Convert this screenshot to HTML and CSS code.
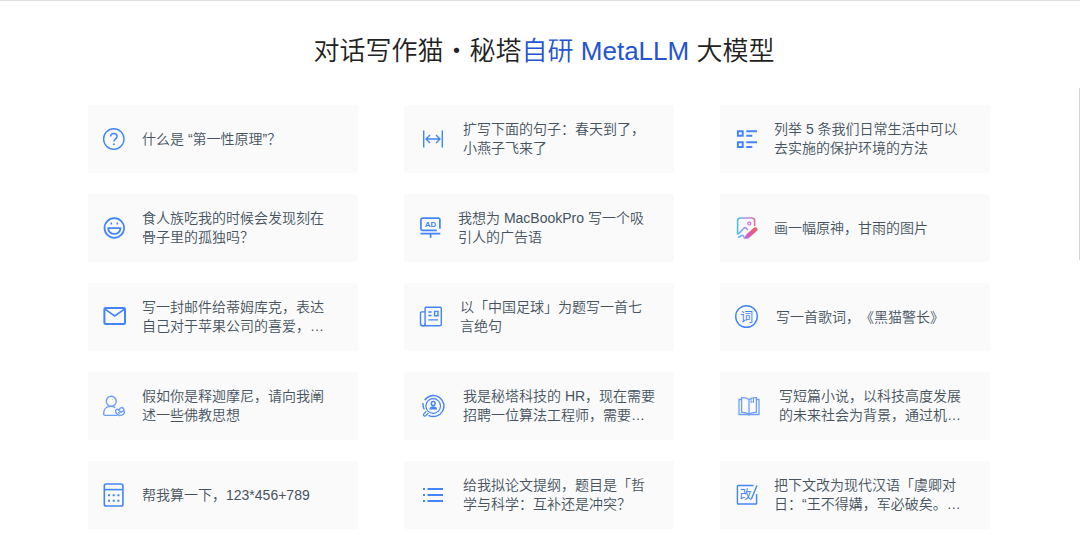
FILE: index.html
```html
<!DOCTYPE html>
<html lang="zh-CN">
<head>
<meta charset="utf-8">
<meta name="viewport" content="width=device-width, initial-scale=1">
<title>对话写作猫</title>
<link rel="stylesheet" href="styles.css">
</head>
<body>
<main class="page">
  <h1 class="title">对话写作猫・秘塔<span class="title-accent">自研 MetaLLM</span> 大模型</h1>
  <div class="prompts">
    <button type="button" class="card">
      <svg class="icon" viewBox="0 0 24 24" aria-hidden="true"><circle cx="11.8" cy="12" r="10.2" stroke-width="1.4"/><path d="M8.6 9.6c0-4.2 6.5-4 6.5-.2 0 2.4-3.2 2.5-3.2 5.2" stroke-width="1.5"/><circle class="solid" cx="11.9" cy="17.3" r="1"/></svg>
      <span class="text">什么是 “第一性原理”？</span>
    </button>
    <button type="button" class="card card-wide">
      <svg class="icon" viewBox="0 0 24 24" aria-hidden="true"><path d="M2.7 3.5v17M21.3 3.5v17M5.5 12h13M9 8l-4 4 4 4M15 8l4 4-4 4" stroke-width="1.4"/></svg>
      <span class="text">扩写下面的句子：春天到了，<br>小燕子飞来了</span>
    </button>
    <button type="button" class="card">
      <svg class="icon" viewBox="0 0 24 24" aria-hidden="true"><path d="M3.9 4.2h4.8v4.6H3.9zM3.9 15.3h4.8v4.6H3.9zM12.3 4.2H23M12.3 8.8h6M12.3 15.3H23M12.3 19.9h6" stroke-width="2"/></svg>
      <span class="text">列举 5 条我们日常生活中可以<br>去实施的保护环境的方法</span>
    </button>

    <button type="button" class="card">
      <svg class="icon" viewBox="0 0 24 24" aria-hidden="true"><circle cx="12.3" cy="12" r="9.8" stroke-width="1.7"/><path d="M6.2 12.2h12.2c.2 7.6-12.4 7.6-12.2 0z" stroke-width="1.8"/><path d="M9.3 6.5v2M15.3 6.5v2" stroke-width="1.6"/></svg>
      <span class="text">食人族吃我的时候会发现刻在<br>骨子里的孤独吗？</span>
    </button>
    <button type="button" class="card">
      <svg class="icon" viewBox="0 0 24 24" aria-hidden="true"><path d="M18.8 14.3H4.5a1.6 1.6 0 0 1-1.6-1.6V3.8a1.6 1.6 0 0 1 1.6-1.6h15.8a1.6 1.6 0 0 1 1.6 1.6v8.9M2.5 17.7h19.8M12.6 17.7v4" stroke-width="1.7"/><text class="glyph glyph-ad" x="12.6" y="11.2">AD</text></svg>
      <span class="text">我想为 MacBookPro 写一个吸<br>引人的广告语</span>
    </button>
    <button type="button" class="card">
      <svg class="icon" viewBox="0 0 24 24" aria-hidden="true">
        <defs><linearGradient id="rainbow" x1="3" y1="0" x2="24" y2="0" gradientUnits="userSpaceOnUse"><stop offset="0" stop-color="#43c3f3"/><stop offset=".5" stop-color="#b58bea"/><stop offset="1" stop-color="#f2646d"/></linearGradient><linearGradient id="brush" x1="9" y1="22" x2="23" y2="11" gradientUnits="userSpaceOnUse"><stop offset="0" stop-color="#b96cf4"/><stop offset=".6" stop-color="#e8558f"/><stop offset="1" stop-color="#f06a5e"/></linearGradient></defs>
        <path stroke="url(#rainbow)" stroke-width="1.6" d="M3.6 18.6V4.8A2.8 2.8 0 0 1 6.4 2h11.4a2.8 2.8 0 0 1 2.8 2.8V10M4.4 18l5.4-5.8c1-1 1.8-.6 2.8.4l1.4 1.4M4 21c2.2.6 2.4-1.5 4.2-1.8 1.5-.2 1.2 1.5 2.3 2.6"/><circle cx="15.3" cy="7.6" r="1.5" stroke="#d66cf0" stroke-width="1.3"/><path d="M20.2 11.4c2-1 4.4 1 3 3l-7.4 6.8c-1.7 1.6-4 2-6.2 1.3 1.7-1 1.7-3.2 3.2-4.5z" fill="url(#brush)" stroke="none"/>
      </svg>
      <span class="text">画一幅原神，甘雨的图片</span>
    </button>

    <button type="button" class="card">
      <svg class="icon" viewBox="0 0 24 24" aria-hidden="true"><rect x="2.4" y="3" width="20.6" height="16" rx="1.2" stroke-width="2"/><path d="M3 4.1l9.7 6.8L22.400 4.100" stroke-width="1.7"/></svg>
      <span class="text">写一封邮件给蒂姆库克，表达<br>自己对于苹果公司的喜爱，…</span>
    </button>
    <button type="button" class="card card-mid">
      <svg class="icon" viewBox="0 0 24 24" aria-hidden="true"><path d="M7.1 20.700V3.300a1 1 0 0 1 1-1h14.200a1 1 0 0 1 1 1v15.600a1.800 1.800 0 0 1-1.800 1.800H4.700a2.200 2.200 0 0 1-2.200-2.200V7.900a1 1 0 0 1 1-1h3.600M10.300 7h3.300M10.300 10.500h3.300M10.300 14.900H20M16.600 6.400H20v4.400h-3.400z" stroke-width="1.4"/><path d="M2.500 18.500a2.300 2.300 0 0 0 4.600 0" stroke-width="1.2"/></svg>
      <span class="text">以「中国足球」为题写一首七<br>言绝句</span>
    </button>
    <button type="button" class="card card-mid">
      <svg class="icon" viewBox="0 0 24 24" aria-hidden="true"><circle cx="12.500" cy="11.500" r="10.800" stroke-width="1.4"/><text class="glyph glyph-ci" x="12.800" y="16.400">词</text></svg>
      <span class="text">写一首歌词，《黑猫警长》</span>
    </button>

    <button type="button" class="card">
      <svg class="icon icon-soft" viewBox="0 0 24 24" aria-hidden="true"><circle cx="9.3" cy="7.2" r="5" stroke-width="1.4"/><path d="M15.5 21.4H3.4c-1.3 0-1.8-.8-1.8-2 .1-4.2 3-7 6.900-7 2 0 3.600.4 4.800 1.300" stroke-width="1.4"/><path d="M17.600 21.600c-3-1.200-4.300-3-3.900-4.900.4-1.800 2.400-1.800 3.400-.3.500-2.600 2.500-3.600 4-2.300 1.300 1.200.600 2.500.600 2.500 1.200.900.700 2.800-.300 3.600-1 .900-2.400 1.300-3.800 1.400zM17.300 16.600l1.700 1.700 2.700-1.600M16 18.200l2 1.600" stroke-width="1.4"/></svg>
      <span class="text">假如你是释迦摩尼，请向我阐<br>述一些佛教思想</span>
    </button>
    <button type="button" class="card card-wide">
      <svg class="icon" viewBox="0 0 24 24" aria-hidden="true"><path d="M3.300 15.500A10.300 10.300 0 0 1 2.100 9M3.700 6.200A10.500 10.500 0 1 1 7.500 21.300" stroke-width="1.400"/><circle cx="12.200" cy="12" r="7.300" stroke-width="1.200"/><circle cx="12.200" cy="9.500" r="2" stroke-width="1.300"/><path d="M8.300 15.600c0-4.400 7.800-4.400 7.800 0z" class="solid"/><path d="M5.300 17.200l-2.600 2.900c-.8 1.400.6 2.600 1.900 1.600l2.700-2.600" stroke-width="1.200"/></svg>
      <span class="text">我是秘塔科技的 HR，现在需要<br>招聘一位算法工程师，需要…</span>
    </button>
    <button type="button" class="card card-wide">
      <svg class="icon icon-soft" viewBox="0 0 24 24" aria-hidden="true"><path d="M12 5.500C9.800 3.600 7.500 3.400 4.600 3.600v14.700c3-.1 5.300.2 7.400 1.900 2.100-1.700 4.400-2 7.400-1.900V3.600c-2.900-.2-5.200 0-7.400 1.900zM12 5.500v14.700" stroke-width="1.300"/><path d="M4.300 5.500H2v15h8.500c1 .8 2 .8 3 0H22v-15h-2.300" stroke-width="1.300"/><path d="M14 4.600v4l1.300-1 1.200 1V4" stroke-width="1"/></svg>
      <span class="text">写短篇小说，以科技高度发展<br>的未来社会为背景，通过机…</span>
    </button>

    <button type="button" class="card">
      <svg class="icon" viewBox="0 0 24 24" aria-hidden="true"><rect x="2.300" y="1" width="18.600" height="22" rx="1.800" stroke-width="1.600"/><path d="M2.300 6.600h18.600" stroke-width="1.600"/><path d="M6 12.200h2m2.700 0h2m2.700 0h2M6 17.700h2m2.700 0h2m2.700 0h2" stroke-width="1.900"/></svg>
      <span class="text">帮我算一下，123*456+789</span>
    </button>
    <button type="button" class="card card-wide">
      <svg class="icon" viewBox="0 0 24 24" aria-hidden="true"><path d="M2 6h2M6.500 6H22M2 12h2M6.500 12H22M2 18h2M6.500 18H22" stroke-width="2"/></svg>
      <span class="text">给我拟论文提纲，题目是「哲<br>学与科学：互补还是冲突？</span>
    </button>
    <button type="button" class="card">
      <svg class="icon" viewBox="0 0 24 24" aria-hidden="true"><path d="M19.500 2.500H4.200a.8.800 0 0 0-.8.800v16.900c0 .5.300.8.800.8h17.600c.500 0 .8-.3.800-.8V11M23 2.500L17.400 16" stroke-width="1.400"/><text class="glyph glyph-gai" x="11.800" y="16.200">改</text></svg>
      <span class="text">把下文改为现代汉语「虞卿对<br>日：“王不得媾，军必破矣。…</span>
    </button>
  </div>
  <div class="scroll-thumb"></div>
</main>
</body>
</html>
```
FILE: styles.css
```css
* {
  box-sizing: border-box;
}

body {
  margin: 0;
  background: #fff;
  font-family: "Liberation Sans", "Noto Sans CJK SC", sans-serif;
  text-spacing-trim: space-all;
}

.page {
  position: relative;
  padding: 30px 90px 7px 88px;
  border-top: 1px solid #ddd;
}

.title {
  margin: 0 0 34px;
  padding-left: 10px;
  font-size: 26px;
  font-weight: 350;
  line-height: 40px;
  text-align: center;
  color: #222;
}

.title-accent {
  color: #2454d0;
}

.prompts {
  display: grid;
  grid-template-columns: repeat(3, 1fr);
  gap: 21px 46px;
}

.card {
  display: flex;
  align-items: center;
  gap: 16px;
  height: 68px;
  padding: 0 14px;
  border: 0;
  border-radius: 2px;
  background: #fafafa;
  color: #46535f;
  font: inherit;
  font-size: 14px;
  font-weight: 350;
  line-height: 19px;
  text-align: left;
  text-spacing-trim: inherit;
  cursor: pointer;
}

.card-mid {
  gap: 18px;
}

.card-wide {
  gap: 18px;
  padding-left: 17px;
}

.text {
  white-space: nowrap;
}

.icon {
  flex: none;
  width: 24px;
  height: 24px;
  fill: none;
  stroke: #4285f8;
}

.icon-soft {
  stroke: #6c9ffa;
}

.solid,
.glyph {
  fill: #4285f8;
  stroke: none;
}

.glyph {
  text-anchor: middle;
  font-weight: 400;
}

.glyph-ad {
  font-size: 8px;
  font-weight: 700;
}

.glyph-ci {
  font-size: 13px;
}

.glyph-gai {
  font-size: 12px;
}

.scroll-thumb {
  position: absolute;
  top: 87px;
  right: 0;
  width: 1px;
  height: 172px;
  background: #d5d5d5;
}
```
